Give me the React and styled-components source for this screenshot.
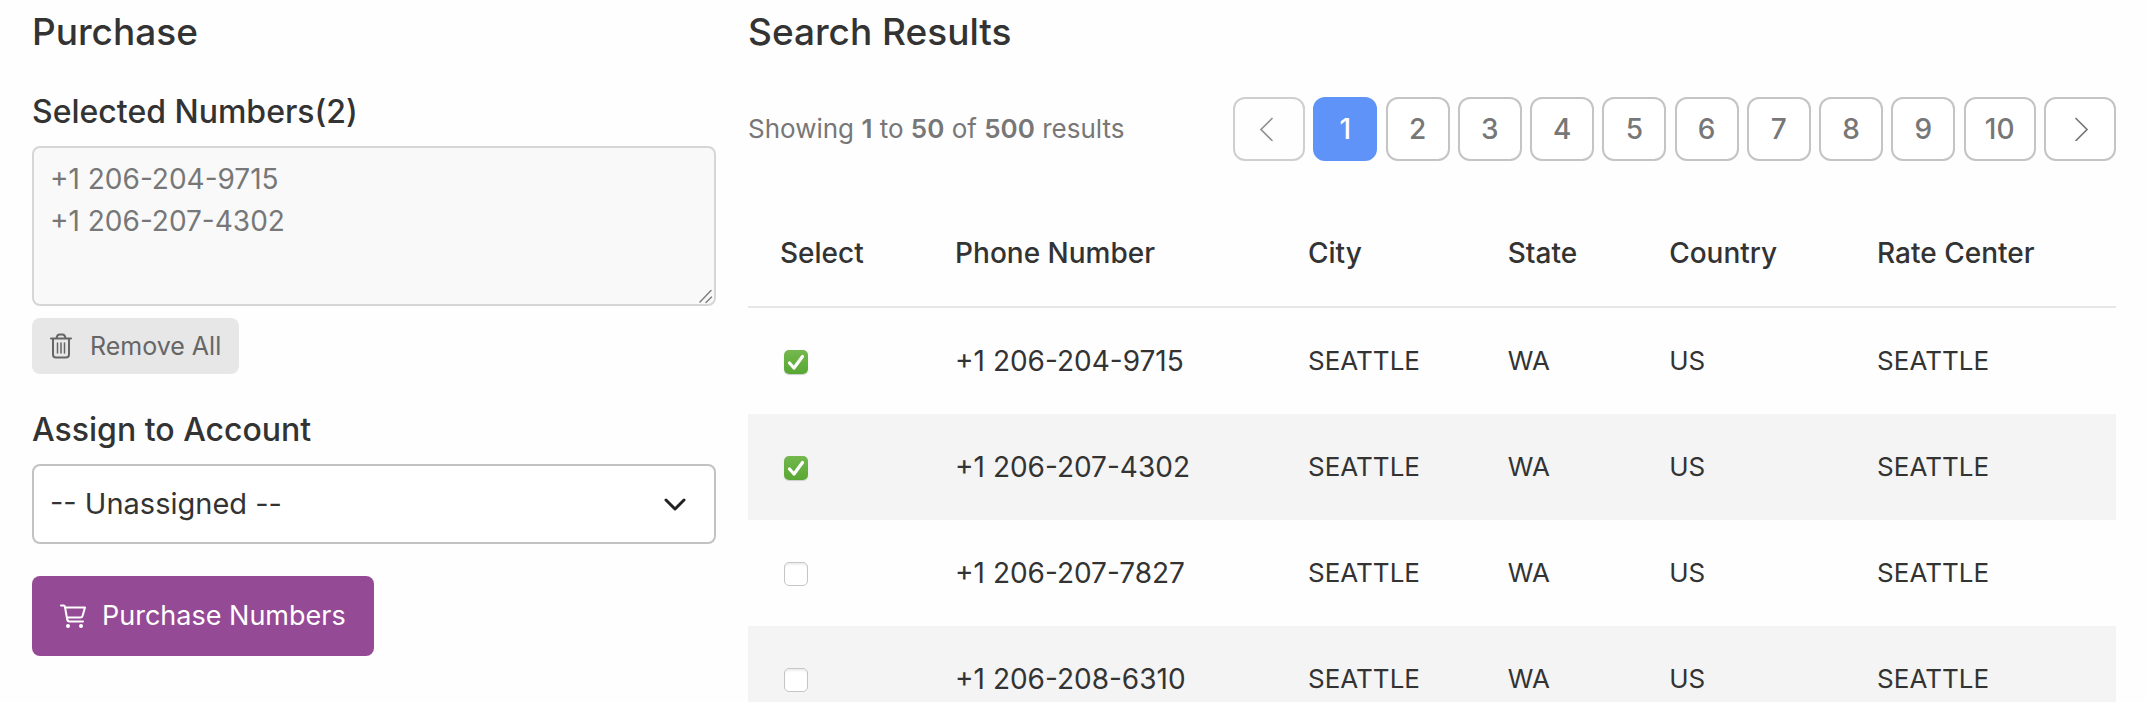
import React, { useState } from "react";
import styled, { createGlobalStyle, css } from "styled-components";

const GlobalStyle = createGlobalStyle`
  *, *::before, *::after { box-sizing: border-box; }
  body {
    margin: 0;
    background: #fefefe;
    color: #333;
    font-family: Inter, "Liberation Sans", sans-serif;
    font-size: 26px;
    line-height: 42px;
  }
  button, textarea, select { font: inherit; color: inherit; }
`;

const Page = styled.main`
  display: grid;
  grid-template-columns: minmax(0, 1fr) minmax(0, 2fr);
  gap: 32px;
  padding: 4px 30px 0 32px;
  height: 100vh;
  overflow: hidden;
`;

const Column = styled.section`
  display: flex;
  flex-direction: column;
  align-items: flex-start;
`;

const Title = styled.h2`
  margin: 0 0 32px;
  font-size: 37px;
  line-height: 56px;
  font-weight: 500;
`;

const FieldLabel = styled.label`
  font-size: 32px;
  line-height: 40px;
  font-weight: 500;
  margin-bottom: 14px;
`;

const NumbersBox = styled.textarea`
  display: block;
  width: 100%;
  height: 160px;
  padding: 10px 16px;
  border: 2px solid #d6d6d6;
  border-radius: 8px;
  background: #f9f9f9;
  color: #777;
  font-size: 28px;
  resize: vertical;
  outline: none;
  &::-webkit-resizer {
    background: url("data:image/svg+xml,%3Csvg xmlns='http://www.w3.org/2000/svg' viewBox='0 0 15 15'%3E%3Cpath d='M1 13 12 1.500M7 13.500 12.500 8' fill='none' stroke='%23808080' stroke-width='1.500' stroke-linecap='round'/%3E%3C/svg%3E") no-repeat;
  }
`;

const Button = styled.button`
  display: inline-flex;
  align-items: center;
  border: 0;
  border-radius: 8px;
  cursor: pointer;
  ${({ $primary }) =>
    $primary
      ? css`
          height: 80px;
          padding: 0 28px;
          gap: 16px;
          background: #954a95;
          color: #fff;
          font-size: 27px;
        `
      : css`
          height: 56px;
          margin: 12px 0 36px;
          padding: 0 18px;
          gap: 18px;
          background: #e7e7e7;
          color: #666;
          font-size: 25px;
        `}
`;

const SelectWrap = styled.div`
  display: grid;
  align-items: center;
  width: 100%;
  margin-bottom: 32px;
  > * { grid-area: 1 / 1; }
  > svg { justify-self: end; margin-right: 30px; pointer-events: none; }
`;

const AccountSelect = styled.select`
  appearance: none;
  width: 100%;
  height: 80px;
  padding: 0 16px;
  border: 2px solid #c2c2c2;
  border-radius: 8px;
  background: #fff;
  font-size: 29px;
`;

const ResultsBar = styled.div`
  display: flex;
  justify-content: space-between;
  align-items: center;
  width: 100%;
  margin: 5px 0 40px;
`;

const Summary = styled.p`
  margin: 0;
  color: #777;
  b { font-weight: 600; }
`;

const Pager = styled.nav`
  display: flex;
  justify-content: space-between;
  width: 883px;
`;

const PageButton = styled.button`
  display: flex;
  align-items: center;
  justify-content: center;
  width: ${({ $wide }) => ($wide ? 72 : 64)}px;
  height: 64px;
  padding: 0;
  border: 2px solid ${({ $current }) => ($current ? "#5f93f8" : "#c4c4c4")};
  border-radius: 12px;
  background: ${({ $current }) => ($current ? "#5f93f8" : "#fff")};
  color: ${({ $current }) => ($current ? "#fff" : "#777")};
  font-size: 28px;
  font-weight: 500;
  cursor: pointer;
  &:disabled { opacity: 0.8; cursor: default; }
`;

const Table = styled.table`
  width: 100%;
  table-layout: fixed;
  border-collapse: separate;
  border-spacing: 0;
  text-align: left;
`;

const HeadCell = styled.th`
  width: ${({ $width }) => $width};
  height: 107px;
  padding: 0 0 2px 32px;
  border-bottom: 2px solid #e6e6e6;
  font-size: 28px;
  font-weight: 500;
  white-space: nowrap;
`;

const Row = styled.tr`
  &:nth-child(even) { background: #f4f4f4; }
`;

const Cell = styled.td`
  height: 106px;
  padding: 0 0 0 32px;
  font-size: ${({ $number }) => ($number ? 28 : 26)}px;
  white-space: nowrap;
`;

const Tick = styled.input`
  appearance: none;
  display: block;
  width: 24px;
  height: 24px;
  margin: 2px 0 0 4px;
  border: 1px solid #c6c6c6;
  border-radius: 5px;
  background: #fff;
  box-shadow: inset 0 2px 2px #eee;
  &:checked {
    border: 0;
    box-shadow: 0 1px 1px #ccc;
    background: url("data:image/svg+xml,%3Csvg xmlns='http://www.w3.org/2000/svg' viewBox='0 0 24 24'%3E%3Cpath d='M5.500 13 10 18 18.500 6.500' fill='none' stroke='white' stroke-width='3.200' stroke-linecap='round' stroke-linejoin='round'/%3E%3C/svg%3E"),
      linear-gradient(#74b84e, #58a733);
  }
`;

const TrashIcon = () => (
  <svg width="22" height="26" viewBox="0 0 22 26" fill="none" stroke="currentColor" strokeWidth="2" strokeLinecap="round" aria-hidden="true">
    <path d="M1 5.500h20M6.500 5C7 2.500 8 1.500 9.500 1.500h3C14 1.500 15 2.500 15.500 5M3 6v15.500a3 3 0 0 0 3 3h10a3 3 0 0 0 3-3V6" />
    <path d="M7.500 10v10M11 10v10M14.500 10v10" strokeWidth="1.500" />
  </svg>
);

const CartIcon = () => (
  <svg width="26" height="24" viewBox="0 0 26 24" fill="none" stroke="currentColor" strokeWidth="2" strokeLinecap="round" strokeLinejoin="round" aria-hidden="true">
    <path d="M1 1.500h2.500c1 0 1.300.5 1.500 1.500l2 11.500c.3 2 1 3 2.500 3H23M5 3.500h20L22.500 12c-.3 1-.8 1.500-2 1.500H7" />
    <circle cx="8" cy="22" r="2" fill="currentColor" stroke="none" />
    <circle cx="21" cy="22" r="2" fill="currentColor" stroke="none" />
  </svg>
);

const DownIcon = () => (
  <svg width="22" height="13" viewBox="0 0 22 13" fill="none" stroke="#222" strokeWidth="3" strokeLinecap="round" strokeLinejoin="round" aria-hidden="true">
    <path d="M2 2l9 9 9-9" />
  </svg>
);

const SideIcon = ({ next }) => (
  <svg width="20" height="24" viewBox="0 0 20 24" fill="none" stroke="currentColor" strokeWidth="1.700" strokeLinecap="round" aria-hidden="true">
    <path d={next ? "M6 1.500l11 11-11 11" : "M13 1.500l-11 11 11 11"} />
  </svg>
);

const columns = [
  ["Select", "12.8%"],
  ["Phone Number", "25.8%"],
  ["City", "14.6%"],
  ["State", "11.8%"],
  ["Country", "15.2%"],
  ["Rate Center", "19.8%"],
];

const numbers = ["+1 206-204-9715", "+1 206-207-4302", "+1 206-207-7827", "+1 206-208-6310"];

export default function App() {
  const [selected, setSelected] = useState(numbers.slice(0, 2));
  const [page, setPage] = useState(1);

  const toggle = (number) =>
    setSelected((list) => (list.includes(number) ? list.filter((n) => n !== number) : [...list, number]));

  return (
    <>
      <GlobalStyle />
      <Page>
        <Column>
          <Title>Purchase</Title>
          <FieldLabel htmlFor="selected">Selected Numbers({selected.length})</FieldLabel>
          <NumbersBox id="selected" readOnly value={selected.join("\n")} />
          <Button type="button" onClick={() => setSelected([])}>
            <TrashIcon />
            Remove All
          </Button>
          <FieldLabel htmlFor="account">Assign to Account</FieldLabel>
          <SelectWrap>
            <AccountSelect id="account">
              <option>-- Unassigned --</option>
            </AccountSelect>
            <DownIcon />
          </SelectWrap>
          <Button type="button" $primary>
            <CartIcon />
            Purchase Numbers
          </Button>
        </Column>
        <Column>
          <Title>Search Results</Title>
          <ResultsBar>
            <Summary>
              Showing <b>1</b> to <b>50</b> of <b>500</b> results
            </Summary>
            <Pager aria-label="Pages">
              <PageButton $wide disabled={page === 1} onClick={() => setPage(page - 1)} aria-label="Previous">
                <SideIcon />
              </PageButton>
              {Array.from({ length: 10 }, (_, i) => i + 1).map((n) => (
                <PageButton key={n} $wide={n > 9} $current={n === page} onClick={() => setPage(n)}>
                  {n}
                </PageButton>
              ))}
              <PageButton $wide disabled={page === 10} onClick={() => setPage(page + 1)} aria-label="Next">
                <SideIcon next />
              </PageButton>
            </Pager>
          </ResultsBar>
          <Table>
            <thead>
              <tr>
                {columns.map(([name, width]) => (
                  <HeadCell key={name} $width={width} scope="col">{name}</HeadCell>
                ))}
              </tr>
            </thead>
            <tbody>
              {numbers.map((number) => (
                <Row key={number}>
                  <Cell>
                    <Tick
                      type="checkbox"
                      aria-label={"Select " + number}
                      checked={selected.includes(number)}
                      onChange={() => toggle(number)}
                    />
                  </Cell>
                  <Cell $number>{number}</Cell>
                  <Cell>SEATTLE</Cell>
                  <Cell>WA</Cell>
                  <Cell>US</Cell>
                  <Cell>SEATTLE</Cell>
                </Row>
              ))}
            </tbody>
          </Table>
        </Column>
      </Page>
    </>
  );
}
